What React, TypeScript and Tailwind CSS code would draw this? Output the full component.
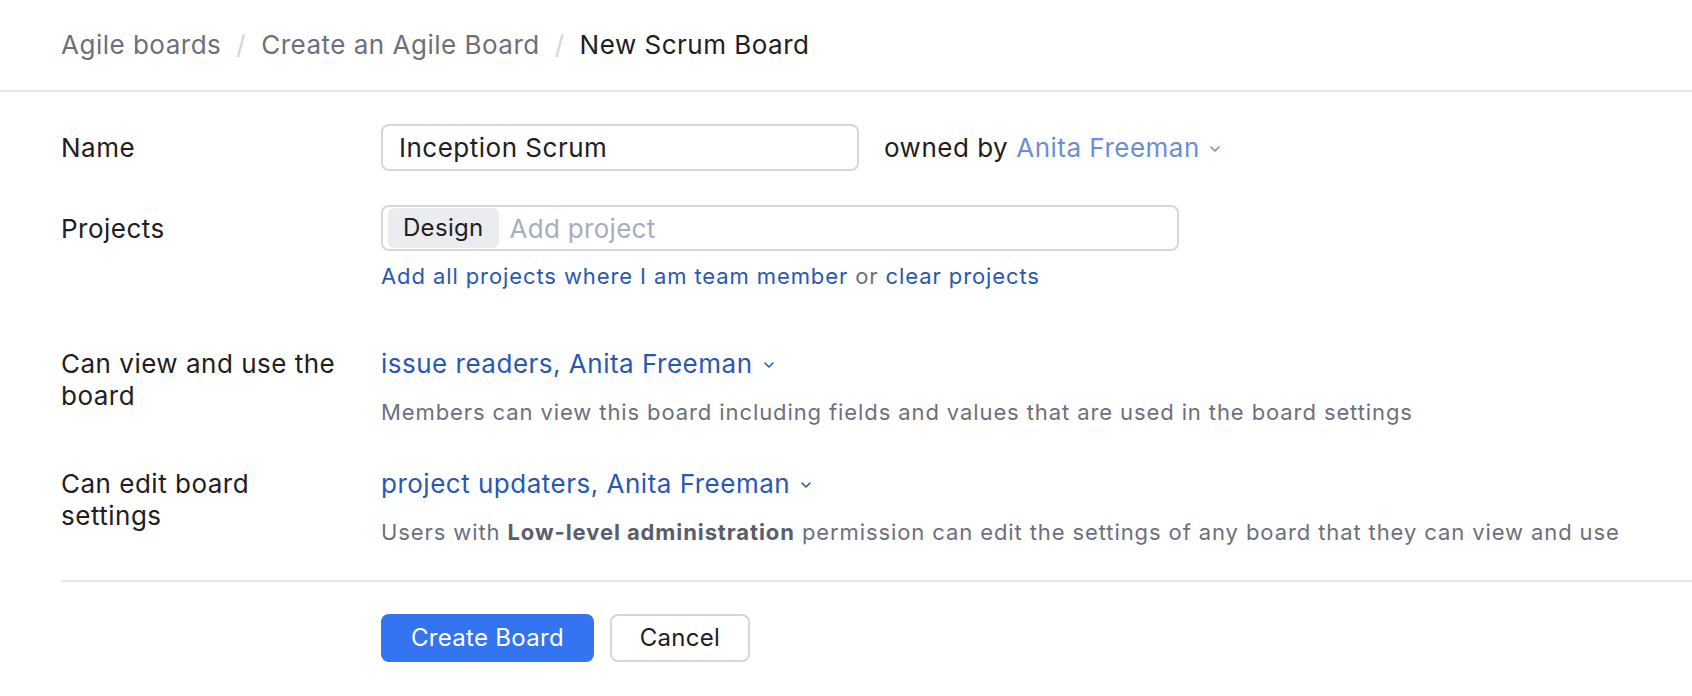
import React from "react";

function Chevron({ className = "" }: { className?: string }) {
  return (
    <svg className={className} width="12" height="8" viewBox="0 0 12 8" fill="none">
      <path d="M2 2 L6 6 L10 2" stroke="currentColor" strokeWidth="1.6" strokeLinecap="round" strokeLinejoin="round" />
    </svg>
  );
}

export default function App() {
  return (
    <div className="min-h-[696px] w-full bg-white text-[#1f2023] tracking-[0.5px]" style={{ fontFamily: "Inter, 'Noto Sans', sans-serif" }}>
      <div className="flex h-[92px] items-center border-b-2 border-[#e4e5e9] pl-[61px] pb-[2px] text-[26px]">
        <span className="text-[#6c707e]">Agile boards</span>
        <span className="mx-[15px] text-[#d3d5db]">/</span>
        <span className="text-[#6c707e]">Create an Agile Board</span>
        <span className="mx-[15px] text-[#d3d5db]">/</span>
        <span className="text-[#1f2023]">New Scrum Board</span>
      </div>

      <div className="pl-[61px]">
        <div className="grid grid-cols-[320px_1fr] pt-[32px]">
          {/* Name */}
          <div className="flex h-[47px] items-center text-[26px]">Name</div>
          <div className="flex items-center">
            <div className="flex h-[47px] w-[478px] items-center rounded-[8px] border-2 border-[#d5d6dc] pl-[16px] text-[26px]">
              Inception Scrum
            </div>
            <span className="ml-[25px] text-[26px]">owned by</span>
            <span className="ml-[8px] text-[26px] text-[#6b8fd0]">Anita Freeman</span>
            <Chevron className="ml-[9px] mt-[2px] text-[#6b8fd0]" />
          </div>

          {/* Projects */}
          <div className="mt-[34px] flex h-[46px] items-center text-[26px]">Projects</div>
          <div className="mt-[34px]">
            <div className="flex h-[46px] w-[798px] items-center rounded-[8px] border-2 border-[#d5d6dc] pl-[5px]">
              <span className="flex h-[40px] items-center rounded-[6px] bg-[#ebecf0] px-[15px] text-[24px] tracking-[0.3px]">Design</span>
              <span className="ml-[11px] text-[26px] tracking-[0.3px] text-[#a8adbd]">Add project</span>
            </div>
            <div className="mt-[9px] text-[22px] leading-[32px] tracking-[0.9px]">
              <span className="text-[#2a58b0]">Add all projects where I am team member</span>
              <span className="text-[#6c707e]"> or </span>
              <span className="text-[#2a58b0]">clear projects</span>
            </div>
          </div>

          {/* Can view */}
          <div className="mt-[56px] text-[26px] leading-[32px]">
            Can view and use the
            <br />
            board
          </div>
          <div className="mt-[56px]">
            <div className="flex items-center text-[26px] leading-[32px] text-[#2a58b0]">
              issue readers, Anita Freeman
              <Chevron className="ml-[10px] mt-[2px]" />
            </div>
            <div className="mt-[16px] text-[22px] leading-[32px] tracking-[0.9px] text-[#6c707e]">
              Members can view this board including fields and values that are used in the board settings
            </div>
          </div>

          {/* Can edit */}
          <div className="mt-[40px] text-[26px] leading-[32px]">
            Can edit board
            <br />
            settings
          </div>
          <div className="mt-[40px]">
            <div className="flex items-center text-[26px] leading-[32px] text-[#2a58b0]">
              project updaters, Anita Freeman
              <Chevron className="ml-[10px] mt-[2px]" />
            </div>
            <div className="mt-[16px] text-[22px] leading-[32px] tracking-[0.9px] text-[#6c707e]">
              Users with <span className="font-bold text-[#5a5e6b]">Low-level administration</span> permission can edit the settings of any board that they can view and use
            </div>
          </div>
        </div>

        <div className="mt-[32px] border-t-2 border-[#e4e5e9]" />

        <div className="grid grid-cols-[320px_1fr] pt-[32px]">
          <div />
          <div className="flex gap-[16px]">
            <button className="flex h-[48px] w-[213px] items-center justify-center rounded-[8px] bg-[#3574f0] text-[24px] tracking-[0.3px] text-white">
              Create Board
            </button>
            <button className="flex h-[48px] w-[140px] items-center justify-center rounded-[8px] border-2 border-[#d5d6dc] bg-white text-[24px] tracking-[0.3px] text-[#1f2023]">
              Cancel
            </button>
          </div>
        </div>
      </div>
    </div>
  );
}
